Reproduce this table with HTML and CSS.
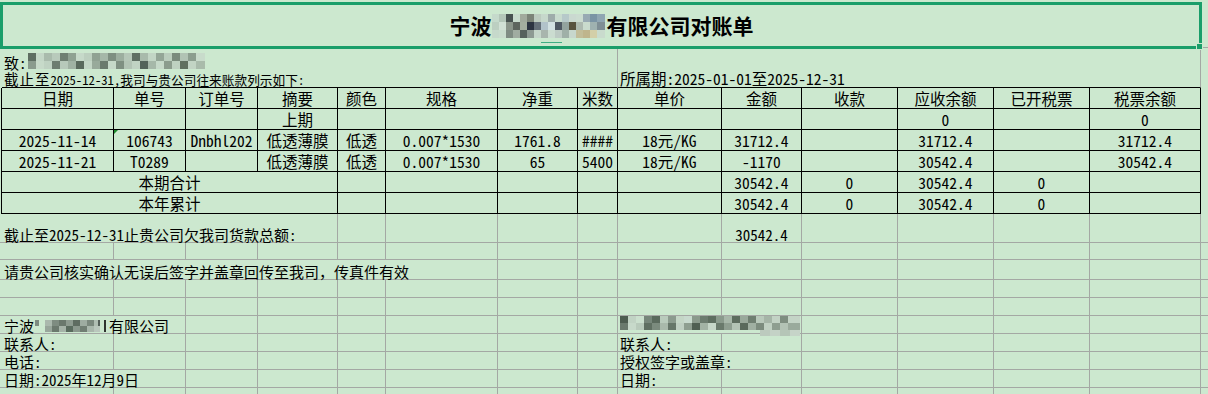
FILE: index.html
```html
<!DOCTYPE html>
<html lang="zh-CN">
<head>
<meta charset="utf-8">
<title>对账单</title>
<link rel="stylesheet" href="styles.css">
</head>
<body>
<div class="sheet">
  <!-- row 1: title -->
  <div class="lead"></div>
  <div class="title s14">宁波<span class="mz mz-title"></span>有限公司对账单</div>
  <div class="rest"></div>

  <!-- rows 2-3 -->
  <div class="lead"></div>
  <div class="top-left s8">
    <div class="to">致:<span class="mz mz-to"></span></div>
    <div class="asof"><span class="sp">截止至</span>2025-12-31,我司与贵公司往来账款列示如下:</div>
  </div>
  <div class="top-right s6">所属期:2025-01-01至2025-12-31</div>
  <div class="gap"></div>

  <!-- table header -->
  <div class="lead-t"></div>
  <div class="c t">日期</div><div class="c t">单号</div><div class="c t">订单号</div><div class="c t">摘要</div><div class="c t">颜色</div><div class="c t">规格</div><div class="c t">净重</div><div class="c t">米数</div><div class="c t">单价</div><div class="c t">金额</div><div class="c t">收款</div><div class="c t">应收余额</div><div class="c t">已开税票</div><div class="c t">税票余额</div>
  <div class="gap"></div>

  <!-- 上期 -->
  <div class="lead-t"></div>
  <div class="c t"></div><div class="c t"></div><div class="c t"></div><div class="c t">上期</div><div class="c t"></div><div class="c t"></div><div class="c t"></div><div class="c t"></div><div class="c t"></div><div class="c t"></div><div class="c t"></div><div class="c t">0</div><div class="c t"></div><div class="c t">0</div>
  <div class="gap"></div>

  <!-- row 1 -->
  <div class="lead-t"></div>
  <div class="c t">2025-11-14</div><div class="c t flag">106743</div><div class="c t">Dnbhl202</div><div class="c t">低透薄膜</div><div class="c t">低透</div><div class="c t">0.007*1530</div><div class="c t">1761.8</div><div class="c t">####</div><div class="c t">18元/KG</div><div class="c t">31712.4</div><div class="c t"></div><div class="c t">31712.4</div><div class="c t"></div><div class="c t">31712.4</div>
  <div class="gap"></div>

  <!-- row 2 -->
  <div class="lead-t"></div>
  <div class="c t">2025-11-21</div><div class="c t">T0289</div><div class="c t"></div><div class="c t">低透薄膜</div><div class="c t">低透</div><div class="c t">0.007*1530</div><div class="c t">65</div><div class="c t">5400</div><div class="c t">18元/KG</div><div class="c t">-1170</div><div class="c t"></div><div class="c t">30542.4</div><div class="c t"></div><div class="c t">30542.4</div>
  <div class="gap"></div>

  <!-- 本期合计 -->
  <div class="lead-t"></div>
  <div class="c t s4">本期合计</div><div class="c t"></div><div class="c t"></div><div class="c t"></div><div class="c t"></div><div class="c t"></div><div class="c t">30542.4</div><div class="c t">0</div><div class="c t">30542.4</div><div class="c t">0</div><div class="c t"></div>
  <div class="gap"></div>

  <!-- 本年累计 -->
  <div class="lead-t"></div>
  <div class="c t s4">本年累计</div><div class="c t"></div><div class="c t"></div><div class="c t"></div><div class="c t"></div><div class="c t"></div><div class="c t">30542.4</div><div class="c t">0</div><div class="c t">30542.4</div><div class="c t">0</div><div class="c t"></div>
  <div class="gap"></div>

  <!-- 总额 -->
  <div class="lead-g"></div>
  <div class="c s4">截止至2025-12-31止贵公司欠我司货款总额:</div><div class="c"></div><div class="c"></div><div class="c"></div><div class="c"></div><div class="c"></div><div class="c ctr">30542.4</div><div class="c"></div><div class="c"></div><div class="c"></div><div class="c"></div>
  <div class="rest"></div>

  <!-- blank -->
  <div class="lead-g"></div>
  <div class="c"></div><div class="c"></div><div class="c"></div><div class="c"></div><div class="c"></div><div class="c"></div><div class="c"></div><div class="c"></div><div class="c"></div><div class="c"></div><div class="c"></div><div class="c"></div><div class="c"></div><div class="c"></div>
  <div class="rest"></div>

  <!-- note -->
  <div class="lead-g"></div>
  <div class="c s6">请贵公司核实确认无误后签字并盖章回传至我司，传真件有效</div><div class="c"></div><div class="c"></div><div class="c"></div><div class="c"></div><div class="c"></div><div class="c"></div><div class="c"></div><div class="c"></div>
  <div class="rest"></div>

  <!-- blank -->
  <div class="lead-g"></div>
  <div class="c"></div><div class="c"></div><div class="c"></div><div class="c"></div><div class="c"></div><div class="c"></div><div class="c"></div><div class="c"></div><div class="c"></div><div class="c"></div><div class="c"></div><div class="c"></div><div class="c"></div><div class="c"></div>
  <div class="rest"></div>

  <!-- blank -->
  <div class="lead-g"></div>
  <div class="c"></div><div class="c"></div><div class="c"></div><div class="c"></div><div class="c"></div><div class="c"></div><div class="c"></div><div class="c"></div><div class="c"></div><div class="c"></div><div class="c"></div><div class="c"></div><div class="c"></div><div class="c"></div>
  <div class="rest"></div>

  <!-- companies -->
  <div class="lead-g"></div>
  <div class="c s2">宁波<span class="mz mz-co"></span>有限公司</div><div class="c"></div><div class="c"></div><div class="c"></div><div class="c"></div><div class="c"></div><div class="c"></div><div class="c s2"><span class="mz mz-right"></span></div><div class="c"></div><div class="c"></div><div class="c"></div><div class="c"></div>
  <div class="rest"></div>

  <!-- contacts -->
  <div class="lead-g"></div>
  <div class="c">联系人:</div><div class="c"></div><div class="c"></div><div class="c"></div><div class="c"></div><div class="c"></div><div class="c"></div><div class="c"></div><div class="c">联系人:</div><div class="c"></div><div class="c"></div><div class="c"></div><div class="c"></div><div class="c"></div>
  <div class="rest"></div>

  <!-- phone / signature -->
  <div class="lead-g"></div>
  <div class="c">电话:</div><div class="c"></div><div class="c"></div><div class="c"></div><div class="c"></div><div class="c"></div><div class="c"></div><div class="c"></div><div class="c s2">授权签字或盖章:</div><div class="c"></div><div class="c"></div><div class="c"></div><div class="c"></div>
  <div class="rest"></div>

  <!-- dates -->
  <div class="lead-g"></div>
  <div class="c s2">日期:2025年12月9日</div><div class="c"></div><div class="c"></div><div class="c"></div><div class="c"></div><div class="c"></div><div class="c"></div><div class="c">日期:</div><div class="c"></div><div class="c"></div><div class="c"></div><div class="c"></div><div class="c"></div>
  <div class="rest"></div>

  <!-- blank -->
  <div class="lead-g"></div>
  <div class="c"></div><div class="c"></div><div class="c"></div><div class="c"></div><div class="c"></div><div class="c"></div><div class="c"></div><div class="c"></div><div class="c"></div><div class="c"></div><div class="c"></div><div class="c"></div><div class="c"></div><div class="c"></div>
  <div class="rest"></div>

  <div class="sel"></div>
</div>
</body>
</html>
```

FILE: styles.css
```css
:root {
  --bg: #cce8cf;
  --grid: #a4a8a4;
  --sel: #1a9e6a;
}

html, body {
  margin: 0;
  padding: 0;
  background: var(--bg);
}

body {
  font-family: "Noto Sans Mono CJK SC", "Noto Sans CJK SC", sans-serif;
  color: #000;
}

.sheet {
  position: relative;
  display: grid;
  grid-template-columns: 2px 112px 72px 72px 80px 48px 112px 80px 40px 104px 80px 96px 96px 96px 111px 1fr;
  grid-template-rows: 48px 40px repeat(6, 21px) 29px 17px 20px repeat(7, 18px);
  width: 1208px;
  height: 394px;
  overflow: hidden;
}

.s2 { grid-column: span 2; }
.s4 { grid-column: span 4; }
.s6 { grid-column: span 6; }
.s8 { grid-column: span 8; }
.s14 { grid-column: span 14; }

.lead-t { border-right: 1px solid #000; }
.lead-g, .rest { border-bottom: 1px solid var(--grid); }

.c {
  box-sizing: border-box;
  min-width: 0;
  display: flex;
  align-items: flex-end;
  padding: 0 2px;
  border-right: 1px solid var(--grid);
  border-bottom: 1px solid var(--grid);
  white-space: nowrap;
  font-size: 15px;
  line-height: 15px;
}

.ctr { justify-content: center; }

.t {
  border-color: #000;
  justify-content: center;
  align-items: center;
  padding: 0;
  font-size: 15.5px;
  line-height: 16px;
}

.flag { position: relative; }
.flag::before {
  content: "";
  position: absolute;
  left: 0;
  top: 0;
  border-top: 4px solid #1e8a2e;
  border-right: 4px solid transparent;
}

/* title */
.title {
  display: flex;
  justify-content: center;
  align-items: center;
  padding-top: 3px;
  font-family: "Noto Sans CJK SC", sans-serif;
  font-weight: 700;
  font-size: 21px;
  line-height: 21px;
  white-space: nowrap;
}

.top-left {
  box-sizing: border-box;
  display: flex;
  flex-direction: column;
  justify-content: flex-end;
  padding: 0 0 1px 2px;
  border-right: 1px solid var(--grid);
  border-bottom: 1px solid #000;
  white-space: nowrap;
}

.to {
  display: flex;
  align-items: flex-end;
  font-size: 15px;
  line-height: 15px;
  margin-bottom: 2px;
}

.asof {
  font-size: 12.7px;
  line-height: 13px;
}
.sp {
  font-size: 14.5px;
  letter-spacing: 1px;
}

.top-right {
  box-sizing: border-box;
  display: flex;
  align-items: flex-end;
  padding: 0 0 1px 2px;
  border-right: 1px solid var(--grid);
  border-bottom: 1px solid #000;
  font-size: 15.5px;
  line-height: 16px;
  white-space: nowrap;
}

/* selection overlay */
.sel {
  position: absolute;
  left: 0;
  top: 2px;
  width: 1202px;
  height: 47px;
  box-sizing: border-box;
  border: 3px solid var(--sel);
  pointer-events: none;
}
.sel::after {
  content: "";
  position: absolute;
  right: -4px;
  bottom: -4px;
  width: 5px;
  height: 5px;
  background: var(--sel);
  border: 1px solid var(--bg);
}

/* redaction mosaics */
.mz { display: inline-block; flex: none; }

.mz-title {
  position: relative;
  width: 113px;
  height: 24px;
  margin: 0 2px 0 0;
  background:
    linear-gradient(90deg, #c5dacb 0 7px, #b3c6b8 7px 14px, #475250 14px 21px, #c8dbcd 21px 28px, #a1aa9c 28px 35px, #7c8478 35px 42px, #bccbbf 42px 49px, #c6d8cb 49px 56px, #9eacaa 56px 63px, #c8dbce 63px 70px, #b6c9c9 70px 77px, #cad9d0 77px 84px, #cbdcd0 84px 91px, #98aab3 91px 98px, #7a94a4 98px 105px, #8fa6b2 105px) 0 0 / 113px 8px no-repeat,
    linear-gradient(90deg, #bccfc1 0 7px, #d1e1d5 7px 14px, #8a958a 14px 21px, #5d655e 21px 28px, #a4ae9f 28px 35px, #2c3441 35px 42px, #646f78 42px 49px, #b2c3ca 49px 56px, #d3e2e2 56px 63px, #4e5862 63px 70px, #93a39e 70px 77px, #58533f 77px 84px, #adbab0 84px 91px, #c9dbcd 91px 98px, #9fb2b0 98px 105px, #7f8f95 105px) 0 8px / 113px 8px no-repeat,
    linear-gradient(90deg, #c6d9cb 0 7px, #c9dccd 7px 14px, #7f8c83 14px 21px, #a0aca1 21px 28px, #56625d 28px 35px, #8d9a93 35px 42px, #c5d6ca 42px 49px, #a8b5ad 49px 56px, #cbdcd0 56px 63px, #bdcbc4 63px 70px, #9fb0a8 70px 77px, #c7d7cc 77px 84px, #c2bd98 84px 91px, #bfb58c 91px 98px, #d3cfa8 98px 105px, #c9dbcd 105px) 0 16px / 113px 8px no-repeat;
}
.mz-title::after {
  content: "";
  position: absolute;
  left: 49px;
  top: 28px;
  width: 21px;
  height: 1px;
  background: #3fae84;
}

.mz-to {
  width: 177px;
  height: 16px;
  margin-left: 1px;
  margin-bottom: 1px;
  background:
    linear-gradient(90deg, #5e6e62 0 8px, #c4d7c7 8px 16px, #a9bbac 16px 24px, #b8cabb 24px 32px, #6f7f72 32px 40px, #8fa192 40px 48px, #c6d9c9 48px 56px, #bccfbf 56px 64px, #90a293 64px 72px, #a5b7a8 72px 80px, #7e8f81 80px 88px, #9cae9f 88px 96px, #b5c7b8 96px 104px, #5f6f63 104px 112px, #a8baab 112px 120px, #c2d5c5 120px 128px, #94a697 128px 136px, #bacdbd 136px 144px, #7a8b7d 144px 152px, #b1c3b4 152px 160px, #8c9e8f 160px 168px, #c8dbcb 168px) 0 0 / 177px 8px no-repeat,
    linear-gradient(90deg, #8a9b8d 0 8px, #c7dac9 8px 16px, #bfd2c2 16px 24px, #6d7d70 24px 32px, #b7c9ba 32px 40px, #a0b2a3 40px 48px, #5a6a5d 48px 56px, #c3d6c6 56px 64px, #98aa9b 64px 72px, #6a7a6d 72px 80px, #c5d8c8 80px 88px, #7f9082 88px 96px, #b2c4b5 96px 104px, #c0d3c3 104px 112px, #53635a 112px 120px, #a6b8a9 120px 128px, #c6d9c9 128px 136px, #8b9c8d 136px 144px, #bed1c1 144px 152px, #60705f 152px 160px, #c2d4c4 160px 168px, #a9bbab 168px) 0 8px / 177px 8px no-repeat;
}

.mz-co {
  width: 75px;
  height: 12px;
  margin-bottom: 1px;
  background:
    linear-gradient(90deg, transparent 0 1px, #7d8b80 1px 5px, transparent 5px 11px, #aab8ad 11px 18px, #7e8c81 18px 25px, #6a786d 25px 32px, #8d9b90 32px 39px, #5e6c61 39px 46px, #9eaca1 46px 53px, #7a887d 53px 60px, #b0beb3 60px 64px, #55605a 64px 66px, transparent 66px 70px, #2f342f 70px 72px, transparent 72px) 0 0 / 75px 6px no-repeat,
    linear-gradient(90deg, transparent 0 11px, #98a69b 11px 18px, #6b796e 18px 25px, #a5b3a8 25px 32px, #596b5e 32px 39px, #8a988d 39px 46px, #707e73 46px 53px, #a9b7ac 53px 60px, #bac7bd 60px 66px, transparent 66px 70px, #2f342f 70px 72px, transparent 72px) 0 6px / 75px 6px no-repeat;
}

.mz-right {
  width: 180px;
  height: 20px;
  margin-bottom: -3px;
  background:
    linear-gradient(90deg, #4d5d50 0 8px, #c1d3c4 8px 16px, #cbe0ce 16px 24px, #76867a 24px 32px, #5a6a5d 32px 40px, #b9cbbc 40px 48px, #8b9b8e 48px 56px, #c4d6c6 56px 64px, #c8dace 64px 72px, #8a9a8c 72px 80px, #6c7c6f 80px 88px, #5e6e60 88px 96px, #8a9a8c 96px 104px, #a7b7a9 104px 112px, #5d6d5f 112px 120px, #99a99b 120px 128px, #6f7f71 128px 136px, #b9c9bb 136px 144px, #a5b5a7 144px 152px, #c2d2c4 152px 160px, #7e8e80 160px 168px, #c4d4c6 168px) 0 0 / 180px 7px no-repeat,
    linear-gradient(90deg, #6a7a6d 0 8px, #c7d9ca 8px 16px, #b8cabb 16px 24px, #5f6f62 24px 32px, #7b8b7e 32px 40px, #a9b9ab 40px 48px, #667669 48px 56px, #bfcfc2 56px 64px, #8e9e90 64px 72px, #4f5f52 72px 80px, #a3b3a5 80px 88px, #c6d6c8 88px 96px, #6a7a6c 96px 104px, #8f9f91 104px 112px, #b4c4b6 112px 120px, #5a6a5c 120px 128px, #a0b0a2 128px 136px, #7c8c7e 136px 144px, #c0d0c2 144px 152px, #8e9e90 152px 160px, #b3c3b5 160px 168px, #9aaa9c 168px) 0 7px / 180px 7px no-repeat,
    linear-gradient(90deg, transparent 0 140px, #bccabe 140px 150px, #c4d2c6 150px 160px, #b5c5b7 160px 170px, #c6d4c8 170px) 0 14px / 180px 6px no-repeat;
}
```
